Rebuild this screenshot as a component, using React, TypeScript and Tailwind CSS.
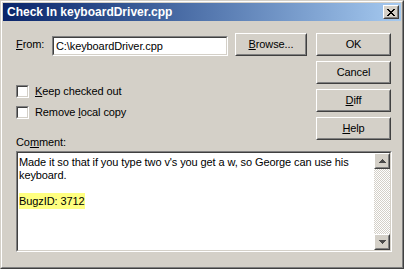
import React from 'react';

type BoxProps = { className?: string; children?: React.ReactNode };

// raised 3d edge, win2000 style
const Raised = ({ className = '', children }: BoxProps) => (
  <div className={`border border-t-white border-l-white border-r-[#404040] border-b-[#404040] ${className}`}>
    <div className="flex h-full w-full items-center justify-center border border-t-[#d4d0c8] border-l-[#d4d0c8] border-r-[#808080] border-b-[#808080]">
      {children}
    </div>
  </div>
);

// sunken edge for fields
const Sunken = ({ className = '', children }: BoxProps) => (
  <div className={`border border-t-[#808080] border-l-[#808080] border-r-white border-b-white ${className}`}>
    <div className="h-full w-full border border-t-[#404040] border-l-[#404040] border-r-[#d4d0c8] border-b-[#d4d0c8] bg-white">
      {children}
    </div>
  </div>
);

const Arrow = ({ up }: { up: boolean }) => (
  <svg width="7" height="4" viewBox="0 0 7 4" shapeRendering="crispEdges">
    <polygon points={up ? '3.5,0 7,4 0,4' : '0,0 7,0 3.5,4'} fill="#4a4a4a" />
  </svg>
);

const CloseGlyph = () => (
  <svg width="8" height="7" viewBox="0 0 8 7" shapeRendering="crispEdges">
    {[
      [0, 0], [1, 0], [6, 0], [7, 0],
      [1, 1], [2, 1], [5, 1], [6, 1],
      [2, 2], [3, 2], [4, 2], [5, 2],
      [3, 3], [4, 3],
      [2, 4], [3, 4], [4, 4], [5, 4],
      [1, 5], [2, 5], [5, 5], [6, 5],
      [0, 6], [1, 6], [6, 6], [7, 6],
    ].map(([x, y]) => (
      <rect key={`${x}-${y}`} x={x} y={y} width="1" height="1" fill="#000" />
    ))}
  </svg>
);

const Checkbox = ({ children }: BoxProps) => (
  <div className="flex h-[13px] items-center gap-[6px]">
    <Sunken className="h-[13px] w-[13px] shrink-0" />
    <span className="leading-[13px]">{children}</span>
  </div>
);

const buttons = [
  { id: 'ok', label: <>OK</> },
  { id: 'cancel', label: <>Cancel</> },
  { id: 'diff', label: <><u>D</u>iff</> },
  { id: 'help', label: <><u>H</u>elp</> },
];

export default function App() {
  return (
    <div className="h-[269px] w-[404px] border border-t-[#d4d0c8] border-l-[#d4d0c8] border-r-[#404040] border-b-[#404040] font-['Liberation_Sans',Arial,sans-serif] text-[11px] text-black">
      <div className="flex h-full flex-col border border-t-white border-l-white border-r-[#808080] border-b-[#808080] bg-[#d4d0c8] p-px">
        {/* Title bar */}
        <div className="flex h-[18px] shrink-0 items-center justify-between bg-linear-to-r from-[#0a246a] to-[#a6caf0] pl-[4px] pr-[2px]">
          <span className="text-[12px] font-bold leading-none text-white">Check In keyboardDriver.cpp</span>
          <Raised className="h-[14px] w-[16px] bg-[#d4d0c8]">
            <CloseGlyph />
          </Raised>
        </div>

        {/* Body */}
        <div className="flex flex-col pl-[13px] pt-[12px] tracking-[-0.1px]">
          <div className="flex items-start">
            <div className="flex w-[291px] flex-col">
              <div className="flex h-[23px] items-start">
                <span className="mt-[5px] w-[36px] leading-[13px]">
                  <u>F</u>rom:
                </span>
                <Sunken className="mt-[3px] h-[20px] w-[176px]">
                  <div className="pl-[2px] pt-[2px] leading-[13px]">C:\keyboardDriver.cpp</div>
                </Sunken>
                <Raised className="ml-[7px] h-[23px] w-[72px]">
                  <span>
                    <u>B</u>rowse...
                  </span>
                </Raised>
              </div>

              <div className="mt-[29px] flex flex-col gap-[8px]">
                <Checkbox>
                  <u>K</u>eep checked out
                </Checkbox>
                <Checkbox>
                  Remove <u>l</u>ocal copy
                </Checkbox>
              </div>

              <div className="mt-[17px] h-[13px] leading-[13px]">
                Co<u>m</u>ment:
              </div>
            </div>

            <div className="ml-[9px] flex w-[75px] flex-col gap-[5px]">
              {buttons.map((b) => (
                <Raised key={b.id} className="h-[23px] w-[75px]">
                  <span>{b.label}</span>
                </Raised>
              ))}
            </div>
          </div>

          {/* Comment box */}
          <Sunken className="mt-[2px] h-[101px] w-[376px]">
            <div className="flex h-full">
              <div className="flex-1 pl-[1px] pt-[3px] leading-[13px] whitespace-nowrap">
                <div>Made it so that if you type two v's you get a w, so George can use his</div>
                <div>keyboard.</div>
                <div>&nbsp;</div>
                <div>
                  <span className="bg-[#ffff80] py-[2px] pr-[1px]">BugzID: 3712</span>
                </div>
              </div>
              <div className="flex w-[16px] flex-col">
                <Raised className="h-[16px] w-[16px] bg-[#d4d0c8]">
                  <Arrow up />
                </Raised>
                <div className="flex-1 bg-[repeating-conic-gradient(#d4d0c8_0_25%,#ffffff_0_50%)] bg-[length:2px_2px]" />
                <Raised className="h-[16px] w-[16px] bg-[#d4d0c8]">
                  <Arrow up={false} />
                </Raised>
              </div>
            </div>
          </Sunken>
        </div>
      </div>
    </div>
  );
}
